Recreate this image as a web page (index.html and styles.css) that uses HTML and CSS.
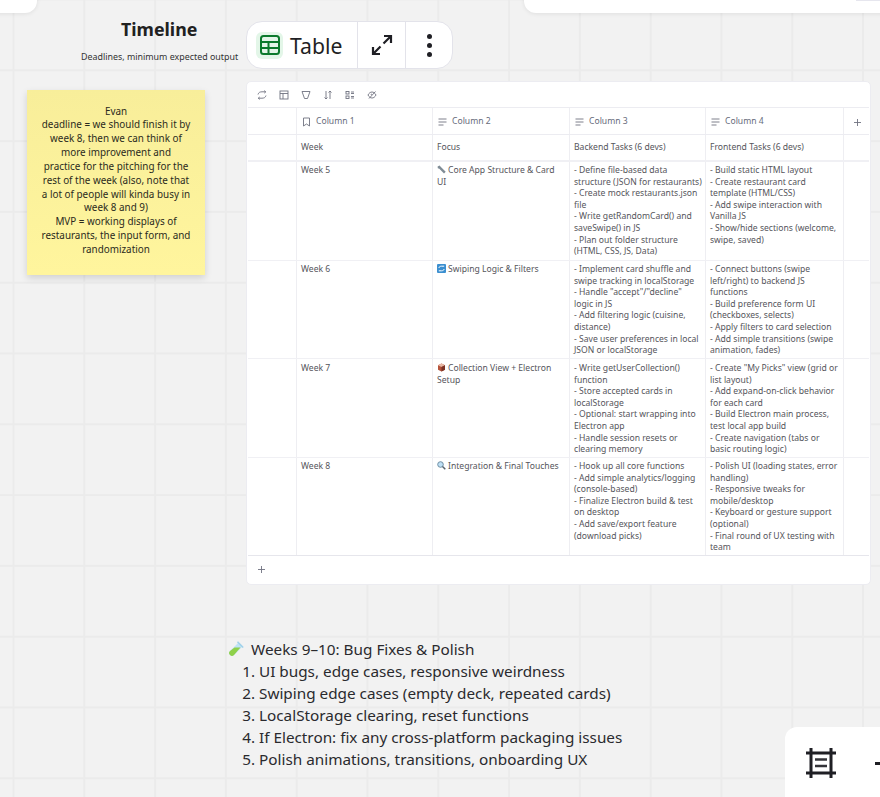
FILE: index.html
```html
<!DOCTYPE html>
<html lang="en">
<head>
    <meta charset="UTF-8">
    <title>Timeline</title>
    <link rel="stylesheet" href="styles.css">
</head>
<body>
<div class="board">
    <div class="clip clip-left"></div>
    <div class="clip clip-top"><span class="clip-tab"></span></div>

    <h1 class="title">Timeline</h1>
    <p class="subtitle">Deadlines, minimum expected output</p>

    <div class="sticky">
        Evan<br>
        deadline = we should finish it by<br>
        week 8, then we can think of<br>
        more improvement and<br>
        practice for the pitching for the<br>
        rest of the week (also, note that<br>
        a lot of people will kinda busy in<br>
        week 8 and 9)<br>
        MVP = working displays of<br>
        restaurants, the input form, and<br>
        randomization
    </div>

    <div class="pill">
        <div class="pill-main">
            <span class="pill-icon">
                <svg width="20" height="20" viewBox="0 0 20 20" fill="none" stroke="#0b7a2c" stroke-width="2"><rect x="1" y="1" width="18" height="18" rx="2.5"/><path d="M1 7h18M1 13h18M8.500 7v12"/></svg>
            </span>
            <span>Table</span>
        </div>
        <div class="pill-btn">
            <svg width="22" height="22" viewBox="0 0 22 22" fill="none" stroke="#1f1f24" stroke-width="2.2"><path d="M13 2h7v7M20 2l-7.500 7.500M2 13v7h7M2 20l7.500-7.500"/></svg>
        </div>
        <div class="pill-btn pill-more">
            <i></i><i></i><i></i>
        </div>
    </div>

    <div class="table-card">
        <div class="toolbar">
            <svg width="10" height="10" viewBox="0 0 10 10"><path d="M1 4.500C1.500 2.500 3 1.800 5 1.800h3.500M7.300.6l1.500 1.300-1.500 1.200M9 5.500C8.500 7.500 7 8.200 5 8.200H1.500M2.700 7l-1.500 1.200 1.500 1.200"/></svg>
            <svg width="10" height="10" viewBox="0 0 10 10"><rect x="1" y="1" width="8" height="8"/><path d="M1 3.500h8M4 3.500V9"/></svg>
            <svg width="10" height="10" viewBox="0 0 10 10"><path d="M1 1.500h8L6.500 8.500h-3z"/></svg>
            <svg width="10" height="10" viewBox="0 0 10 10"><path d="M3 1v8M1.500 7.500L3 9l1.500-1.500M7 9V1M5.500 2.500L7 1l1.500 1.500"/></svg>
            <svg width="10" height="10" viewBox="0 0 10 10"><rect x="1" y="1.500" width="3" height="2.500"/><rect x="1" y="6" width="3" height="2.500"/><path d="M6 2h3M6 3.500h3M6 6.500h3M6 8h3"/></svg>
            <svg width="10" height="10" viewBox="0 0 10 10"><path d="M1 5c1-2 2.500-3 4-3s3 1 4 3c-1 2-2.500 3-4 3S2 7 1 5zM2 8.500L8.500 1.500M4 5a1 1 0 0 1 1-1"/></svg>
        </div>

        <div class="grid">
            <div class="row row-head">
                <div class="cell"></div>
                <div class="cell head">
                    <svg width="9" height="10" viewBox="0 0 9 10"><path d="M1.500 1h6v8L4.500 7 1.500 9z"/></svg>Column 1
                </div>
                <div class="cell head">
                    <svg width="9" height="10" viewBox="0 0 9 10"><path d="M.5 2h8M.5 5h8M.5 8h5"/></svg>Column 2
                </div>
                <div class="cell head">
                    <svg width="9" height="10" viewBox="0 0 9 10"><path d="M.5 2h8M.5 5h8M.5 8h5"/></svg>Column 3
                </div>
                <div class="cell head">
                    <svg width="9" height="10" viewBox="0 0 9 10"><path d="M.5 2h8M.5 5h8M.5 8h5"/></svg>Column 4
                </div>
                <div class="cell add-col">
                    <svg width="9" height="9" viewBox="0 0 9 9"><path d="M4.500 1v7M1 4.500h7"/></svg>
                </div>
            </div>

            <div class="row row-title">
                <div class="cell"></div>
                <div class="cell">Week</div>
                <div class="cell">Focus</div>
                <div class="cell">Backend Tasks (6 devs)</div>
                <div class="cell">Frontend Tasks (6 devs)</div>
                <div class="cell"></div>
            </div>

            <div class="row row-5">
                <div class="cell"></div>
                <div class="cell">Week 5</div>
                <div class="cell">
                    <svg class="emoji" width="9" height="9" viewBox="0 0 9 9"><path d="M.6 1.400L2.600.4l1.300 1.700L8.700 6.800 7 8.500 2.300 3.700.8 3.300z" fill="#7f8c96"/></svg>Core App Structure &amp; Card<br>UI
                </div>
                <div class="cell">
                    - Define file-based data<br>
                    structure (JSON for restaurants)<br>
                    - Create mock restaurants.json<br>
                    file<br>
                    - Write getRandomCard() and<br>
                    saveSwipe() in JS<br>
                    - Plan out folder structure<br>
                    (HTML, CSS, JS, Data)
                </div>
                <div class="cell">
                    - Build static HTML layout<br>
                    - Create restaurant card<br>
                    template (HTML/CSS)<br>
                    - Add swipe interaction with<br>
                    Vanilla JS<br>
                    - Show/hide sections (welcome,<br>
                    swipe, saved)
                </div>
                <div class="cell"></div>
            </div>

            <div class="row row-6">
                <div class="cell"></div>
                <div class="cell">Week 6</div>
                <div class="cell">
                    <svg class="emoji" width="9" height="9" viewBox="0 0 9 9"><rect width="9" height="9" rx="1" fill="#3b8fd0"/><path d="M1.800 4C2.200 2.600 3.300 2.200 4.500 2.200h2.700M7.200 5C6.800 6.400 5.700 6.800 4.500 6.800H1.800" fill="none" stroke="#fff" stroke-width="1"/></svg>Swiping Logic &amp; Filters
                </div>
                <div class="cell">
                    - Implement card shuffle and<br>
                    swipe tracking in localStorage<br>
                    - Handle "accept"/"decline"<br>
                    logic in JS<br>
                    - Add filtering logic (cuisine,<br>
                    distance)<br>
                    - Save user preferences in local<br>
                    JSON or localStorage
                </div>
                <div class="cell">
                    - Connect buttons (swipe<br>
                    left/right) to backend JS<br>
                    functions<br>
                    - Build preference form UI<br>
                    (checkboxes, selects)<br>
                    - Apply filters to card selection<br>
                    - Add simple transitions (swipe<br>
                    animation, fades)
                </div>
                <div class="cell"></div>
            </div>

            <div class="row row-7">
                <div class="cell"></div>
                <div class="cell">Week 7</div>
                <div class="cell">
                    <svg class="emoji" width="9" height="9" viewBox="0 0 9 9"><path d="M4.500.5L8 2.300v4.400L4.500 8.500 1 6.700V2.300z" fill="#b5523a"/><path d="M1 2.300l3.500 1.800L8 2.300 4.500.5z" fill="#e8b9a6"/><path d="M4.500 4.100v4.400L8 6.700V2.300z" fill="#7a3325"/></svg>Collection View + Electron<br>Setup
                </div>
                <div class="cell">
                    - Write getUserCollection()<br>
                    function<br>
                    - Store accepted cards in<br>
                    localStorage<br>
                    - Optional: start wrapping into<br>
                    Electron app<br>
                    - Handle session resets or<br>
                    clearing memory
                </div>
                <div class="cell">
                    - Create "My Picks" view (grid or<br>
                    list layout)<br>
                    - Add expand-on-click behavior<br>
                    for each card<br>
                    - Build Electron main process,<br>
                    test local app build<br>
                    - Create navigation (tabs or<br>
                    basic routing logic)
                </div>
                <div class="cell"></div>
            </div>

            <div class="row row-8">
                <div class="cell"></div>
                <div class="cell">Week 8</div>
                <div class="cell">
                    <svg class="emoji" width="9" height="9" viewBox="0 0 9 9"><circle cx="3.500" cy="3.500" r="2.800" fill="#bfe0f5" stroke="#6f8ea3" stroke-width="1"/><path d="M5.500 5.500L8.300 8.300" stroke="#56646e" stroke-width="1.500"/></svg>Integration &amp; Final Touches
                </div>
                <div class="cell">
                    - Hook up all core functions<br>
                    - Add simple analytics/logging<br>
                    (console-based)<br>
                    - Finalize Electron build &amp; test<br>
                    on desktop<br>
                    - Add save/export feature<br>
                    (download picks)
                </div>
                <div class="cell">
                    - Polish UI (loading states, error<br>
                    handling)<br>
                    - Responsive tweaks for<br>
                    mobile/desktop<br>
                    - Keyboard or gesture support<br>
                    (optional)<br>
                    - Final round of UX testing with<br>
                    team
                </div>
                <div class="cell"></div>
            </div>
        </div>

        <div class="add-row">
            <svg width="9" height="9" viewBox="0 0 9 9"><path d="M4.500 1v7M1 4.500h7"/></svg>
        </div>
    </div>

    <div class="notes">
        <div class="notes-title">
            <svg width="16" height="16" viewBox="0 0 16 16"><path d="M10.500 1.500l4 4-8.500 8.500a2.800 2.800 0 0 1-4-4z" fill="#bfe3f5"/><path d="M6.500 6.500h6L6 14a2.800 2.800 0 0 1-4-4z" fill="#8fd14a"/><path d="M9.500.8l5.700 5.700" stroke="#9fd0ea" stroke-width="1.500"/></svg>
            <span>Weeks 9–10: Bug Fixes &amp; Polish</span>
        </div>
        <ol class="notes-list">
            <li>UI bugs, edge cases, responsive weirdness</li>
            <li>Swiping edge cases (empty deck, repeated cards)</li>
            <li>LocalStorage clearing, reset functions</li>
            <li>If Electron: fix any cross-platform packaging issues</li>
            <li>Polish animations, transitions, onboarding UX</li>
        </ol>
    </div>

    <div class="dock">
        <svg width="30" height="30" viewBox="0 0 30 30" fill="none" stroke="#1f1f24" stroke-width="3"><path d="M0 5h30M0 25h30M5 0v30M25 0v30"/><path d="M9 11.500h12M9 18h12" stroke="#333338" stroke-width="2.500"/></svg>
        <span class="dock-dash"></span>
    </div>
</div>
</body>
</html>
```
FILE: styles.css
```css
* {
    box-sizing: border-box;
    margin: 0;
    padding: 0;
}

html, body {
    width: 880px;
    height: 797px;
    overflow: hidden;
}

body {
    font-family: "Noto Sans", sans-serif;
    color: #1f1f24;
}

/* the canvas, everything on it is placed freely */
.board {
    position: relative;
    width: 880px;
    height: 797px;
    overflow: hidden;
    background-color: #f2f2f2;
    background-image:
        linear-gradient(to right, #ebebeb 2px, transparent 2px),
        linear-gradient(to bottom, #ebebeb 2px, transparent 2px);
    background-size: 70.8px 70.8px;
    background-position: 12.5px -1.5px;
}

.clip {
    position: absolute;
    top: -20px;
    background: #fff;
    border-radius: 12px;
    box-shadow: 0 1px 4px rgba(0, 0, 0, 0.08);
}

.clip-left {
    left: -20px;
    width: 57px;
    height: 33px;
}

.clip-top {
    left: 524px;
    width: 380px;
    height: 33px;
}

.clip-tab {
    position: absolute;
    left: 332px;
    top: 20px;
    width: 48px;
    height: 1px;
    background: #e6e6ee;
}

.title {
    position: absolute;
    left: 121px;
    top: 16px;
    font-size: 17.8px;
    line-height: 26px;
    font-weight: 700;
    color: #212121;
}

.subtitle {
    position: absolute;
    left: 81px;
    top: 50px;
    font-size: 8.9px;
    line-height: 14px;
    color: #333;
}

.sticky {
    position: absolute;
    left: 27px;
    top: 90px;
    width: 178px;
    height: 185px;
    padding-top: 14.5px;
    background: #fff4a0;
    background-image: linear-gradient(to bottom, #f8ee9a, #fff59d);
    box-shadow: 0 3px 7px rgba(0, 0, 0, 0.14);
    font-size: 9.9px;
    line-height: 13.85px;
    text-align: center;
    color: #2a2a20;
}

.pill {
    position: absolute;
    left: 246px;
    top: 21px;
    height: 48px;
    display: flex;
    background: #fff;
    border: 1px solid #e3e3ea;
    border-radius: 16px;
}

.pill-main {
    width: 110px;
    display: flex;
    align-items: center;
    gap: 7px;
    padding-left: 9px;
    font-size: 21.2px;
    color: #1f1f24;
}

.pill-icon {
    width: 27px;
    height: 27px;
    display: flex;
    align-items: center;
    justify-content: center;
    border-radius: 6px;
    background: #e3f6e8;
}

.pill-btn {
    width: 48px;
    display: flex;
    align-items: center;
    justify-content: center;
    border-left: 1px solid #e3e3ea;
}

.pill-more {
    width: 47px;
    flex-direction: column;
    gap: 4px;
}

.pill-more i {
    width: 5px;
    height: 5px;
    border-radius: 50%;
    background: #1f1f24;
}

.table-card {
    position: absolute;
    left: 246px;
    top: 81px;
    width: 625px;
    height: 504px;
    background: #fff;
    border: 1px solid #ececf1;
    border-radius: 5px;
}

.toolbar {
    height: 25px;
    display: flex;
    align-items: center;
    gap: 12px;
    padding-left: 10px;
}

.toolbar svg, .head svg, .add-col svg, .add-row svg {
    fill: none;
    stroke: #6f7280;
    stroke-width: 0.9;
    flex: none;
}

.grid {
    margin-left: 1px;
    width: 621px;
    border-top: 1px solid #ececf1;
    border-bottom: 1px solid #e6e6ec;
    font-size: 8.6px;
    line-height: 11.6px;
    color: #55555b;
}

.row {
    display: grid;
    grid-template-columns: 48px 136px 137px 136px 138px 26px;
    border-bottom: 1px solid #f0f0f4;
}

.row:last-child {
    border-bottom: 0;
}

.row-head { height: 27px; border-bottom-color: #ececf1; }
.row-title { height: 27px; border-bottom-width: 2px; }
.row-5 { height: 99px; }
.row-6 { height: 98px; }
.row-7 { height: 99px; }
.row-8 { height: 97px; }

.cell {
    padding: 3px 4px 0 4px;
    border-left: 1px solid #eeeef2;
    white-space: nowrap;
    overflow: hidden;
}

.cell:first-child {
    border-left: 0;
}

.row-title .cell {
    padding-top: 7px;
}

.row-7 .cell {
    padding-top: 4px;
}

.cell.head {
    display: flex;
    align-items: center;
    gap: 5px;
    padding: 2px 0 0 5px;
    color: #666a7a;
}

.cell.add-col {
    display: flex;
    align-items: center;
    justify-content: center;
    padding: 2px 0 0 1px;
}

.emoji {
    margin-right: 2px;
    vertical-align: -1px;
}

.add-row {
    height: 27px;
    display: flex;
    align-items: center;
    padding-left: 10px;
}

.notes {
    position: absolute;
    left: 228px;
    top: 638px;
    font-size: 15.3px;
    line-height: 22px;
    color: #2a2a2e;
}

.notes-title {
    display: flex;
    align-items: center;
    gap: 7px;
}

.notes-list {
    padding-left: 31px;
}

.dock {
    position: absolute;
    left: 785px;
    top: 727px;
    width: 120px;
    height: 90px;
    display: flex;
    align-items: center;
    gap: 39px;
    padding: 0 0 18px 21px;
    background: #fff;
    border-radius: 12px;
}

.dock-dash {
    width: 8px;
    height: 3px;
    flex: none;
    background: #1f1f24;
}
```
